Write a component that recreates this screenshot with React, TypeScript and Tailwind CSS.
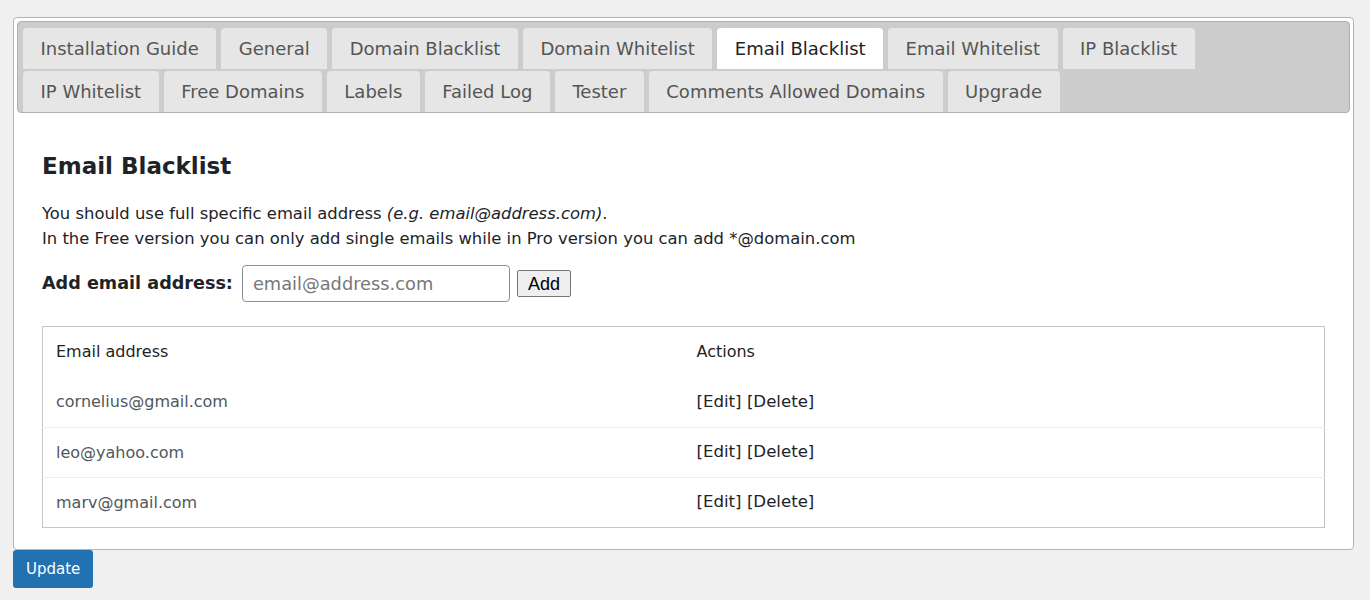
import React, { useState } from 'react';

const row1 = ['Installation Guide', 'General', 'Domain Blacklist', 'Domain Whitelist', 'Email Blacklist', 'Email Whitelist', 'IP Blacklist'];
const row2 = ['IP Whitelist', 'Free Domains', 'Labels', 'Failed Log', 'Tester', 'Comments Allowed Domains', 'Upgrade'];

const emails = ['cornelius@gmail.com', 'leo@yahoo.com', 'marv@gmail.com'];

const Tab: React.FC<{ label: string; active: boolean; onClick: () => void }> = ({ label, active, onClick }) => (
    <button
        onClick={onClick}
        className={`h-[41px] px-[17.5px] rounded-t-[4px] text-[18px] leading-none ${active ? 'bg-white text-[#1d2327]' : 'bg-[#e6e6e6] text-[#555]'}`}
    >
        {label}
    </button>
);

export default function App() {
    const [active, setActive] = useState('Email Blacklist');
    const [email, setEmail] = useState('');

    return (
        <div className="min-h-[600px] bg-[#f0f0f1] pt-[17px] pl-[13px] pr-[16px] text-[#1d2327]" style={{ fontFamily: '"DejaVu Sans", Verdana, sans-serif' }}>
            <div className="bg-white border border-[#b4b4b4] rounded-[4px] p-[3px] pb-[21px]">
                <div className="bg-[#cccccc] border border-[#b0b0b0] rounded-[4px] pt-[6px] px-[5px] flex flex-col gap-[2px]">
                    <div className="flex gap-[5px]">
                        {row1.map(t => <Tab key={t} label={t} active={active === t} onClick={() => setActive(t)} />)}
                    </div>
                    <div className="flex gap-[5px]">
                        {row2.map(t => <Tab key={t} label={t} active={active === t} onClick={() => setActive(t)} />)}
                    </div>
                </div>

                <div className="px-[25px]">
                    <h2 className="mt-[42px] text-[23px] font-bold leading-none">Email Blacklist</h2>
                    <p className="mt-[23px] text-[16.4px] leading-[25px]">
                        You should use full specific email address <em>(e.g. email@address.com)</em>.<br />
                        In the Free version you can only add single emails while in Pro version you can add *@domain.com
                    </p>
                    <div className="mt-[14px] flex items-center">
                        <label className="text-[17.6px] font-bold">Add email address:</label>
                        <input
                            value={email}
                            onChange={e => setEmail(e.target.value)}
                            placeholder="email@address.com"
                            className="ml-[9px] w-[268px] h-[37px] px-[10px] border border-[#8c8f94] rounded-[4px] text-[17.8px] placeholder:text-[#777]"
                        />
                        <button className="ml-[7px] h-[27px] px-[10px] border border-[#767676] rounded-[2px] bg-[#efefef] text-[18px] text-black leading-none" style={{ fontFamily: '"Liberation Sans", Arial, sans-serif' }}>Add</button>
                    </div>

                    <table className="mt-[24px] w-full border border-[#c3c4c7] border-collapse text-[16px]">
                        <thead>
                            <tr className="h-[51px]">
                                <th className="w-1/2 text-left font-normal px-[13px]">Email address</th>
                                <th className="text-left font-normal px-[13px]">Actions</th>
                            </tr>
                        </thead>
                        <tbody>
                            {emails.map((e, i) => (
                                <tr key={e} className={`h-[50px] ${i > 0 ? 'border-t border-[#ececec]' : ''}`}>
                                    <td className="px-[13px] text-[#50575e]">{e}</td>
                                    <td className="px-[13px] text-[16.6px]">
                                        <a href="#" className="text-[#1d2327]">[Edit]</a>{' '}
                                        <a href="#" className="text-[#1d2327]">[Delete]</a>
                                    </td>
                                </tr>
                            ))}
                        </tbody>
                    </table>
                </div>
            </div>
            <button className="h-[38px] px-[13px] bg-[#2271b1] text-white text-[15px] rounded-[3px]">Update</button>
        </div>
    );
}
